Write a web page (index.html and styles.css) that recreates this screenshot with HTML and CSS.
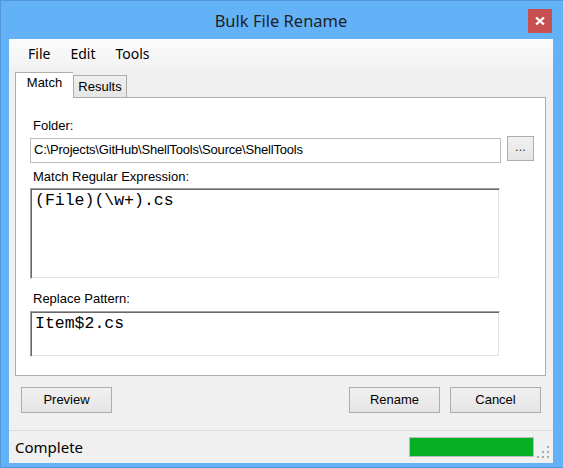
FILE: index.html
```html
<!DOCTYPE html>
<html>
<head>
<meta charset="utf-8">
<title>Bulk File Rename</title>
<link rel="stylesheet" href="styles.css">
</head>
<body>
<div class="window">
  <div class="titlebar">
    <div class="title">Bulk File Rename</div>
    <div class="close">
      <svg width="10" height="8" viewBox="0 0 10 8"><path d="M1 0.5 L9 7.5 M9 0.5 L1 7.5" stroke="#fff" stroke-width="2.2" fill="none"/></svg>
    </div>
  </div>
  <div class="client">
    <div class="menubar">
      <span class="menu-item">File</span>
      <span class="menu-item">Edit</span>
      <span class="menu-item">Tools</span>
    </div>
    <div class="tabs">
      <div class="tabstrip">
        <div class="tab tab-active">Match</div>
        <div class="tab">Results</div>
      </div>
      <div class="tabpage">
        <div class="label">Folder:</div>
        <div class="folder-row">
          <div class="textbox">C:\Projects\GitHub\ShellTools\Source\ShellTools</div>
          <div class="browse">...</div>
        </div>
        <div class="label label-regex">Match Regular Expression:</div>
        <div class="memo memo-tall">(File)(\w+).cs</div>
        <div class="label label-replace">Replace Pattern:</div>
        <div class="memo memo-short">Item$2.cs</div>
      </div>
    </div>
    <div class="buttons">
      <div class="btn">Preview</div>
      <div class="spacer"></div>
      <div class="btn">Rename</div>
      <div class="btn">Cancel</div>
    </div>
    <div class="statusbar">
      <div class="status-text">Complete</div>
      <div class="progress"><div class="progress-fill"></div></div>
      <svg class="grip" width="12" height="13" viewBox="0 0 12 13">
        <rect x="10" y="1" width="2" height="2" fill="#a9a9a9"/>
        <rect x="5" y="6" width="2" height="2" fill="#a9a9a9"/>
        <rect x="10" y="6" width="2" height="2" fill="#a9a9a9"/>
        <rect x="0" y="11" width="2" height="2" fill="#a9a9a9"/>
        <rect x="5" y="11" width="2" height="2" fill="#a9a9a9"/>
        <rect x="10" y="11" width="2" height="2" fill="#a9a9a9"/>
      </svg>
    </div>
  </div>
</div>
</body>
</html>
```
FILE: styles.css
```css
* { box-sizing: border-box; }
html, body { margin: 0; padding: 0; }
body {
  width: 563px;
  height: 468px;
  overflow: hidden;
  background: #63b2f8;
}
.window {
  width: 563px;
  height: 468px;
  background: #63b2f8;
  border-left: 1px solid #5296d6;
  border-top: 1px solid #5296d6;
  border-bottom: 1px solid #5296d6;
  padding: 0 10px 4px 8px;
  display: flex;
  flex-direction: column;
}
.titlebar {
  height: 38px;
  display: flex;
  align-items: flex-start;
}
.title {
  flex: 1;
  text-align: center;
  padding-left: 25px;
  font-family: "Noto Sans", sans-serif;
  font-size: 16.5px;
  line-height: 39px;
  color: #1f1f1f;
}
.close {
  width: 24px;
  height: 24px;
  margin-top: 8px;
  margin-right: 1px;
  background: #c75050;
  display: flex;
  align-items: center;
  justify-content: center;
}
.close svg { display: block; }
.client {
  flex: 1;
  background: #f0f0f0;
  display: flex;
  flex-direction: column;
}
.menubar {
  height: 29px;
  background: linear-gradient(#fbfbfb, #f3f3f3);
  display: flex;
  padding-left: 9px;
  font-family: "Noto Sans", sans-serif;
  font-size: 14px;
  line-height: 29px;
  color: #000;
}
.menu-item { padding: 0 10px; }
.tabs {
  margin-top: 4px;
  padding-left: 6px;
  padding-right: 7px;
}
.tabstrip {
  height: 25px;
  display: flex;
  align-items: flex-end;
  font-family: "Liberation Sans", Arial, sans-serif;
  font-size: 13px;
  color: #000;
}
.tab {
  height: 22px;
  width: 54px;
  border: 1px solid #acacac;
  border-bottom: none;
  background: linear-gradient(#f0f0f0, #e5e5e5);
  text-align: center;
  line-height: 20px;
  padding-top: 1px;
}
.tab-active {
  position: relative;
  z-index: 1;
  height: 26px;
  width: 58px;
  margin-bottom: -1px;
  background: #fff;
  border-right: none;
  line-height: 20px;
  padding-top: 0;
  padding-left: 0;
}
.tabpage {
  height: 279px;
  background: #fff;
  border: 1px solid #acacac;
  padding: 20px 0 0 14px;
  font-family: "Liberation Sans", Arial, sans-serif;
  font-size: 13px;
  color: #000;
}
.label {
  line-height: 15px;
  padding-left: 3px;
}
.label-regex { margin-top: 6px; }
.label-replace { margin-top: 12px; }
.folder-row {
  display: flex;
  align-items: flex-start;
  margin-top: 3px;
}
.textbox {
  width: 471px;
  height: 25px;
  margin-top: 2px;
  border: 1px solid #bdbdbd;
  padding-left: 3px;
  line-height: 22px;
  letter-spacing: -0.2px;
  white-space: nowrap;
  overflow: hidden;
}
.browse {
  width: 27px;
  height: 25px;
  margin-left: 6px;
  border: 1px solid #adadad;
  background: linear-gradient(#f0f0f0, #e5e5e5);
  text-align: center;
  line-height: 20px;
  font-size: 13px;
  color: #333;
}
.memo {
  width: 470px;
  margin-top: 4px;
  border: 1px solid;
  border-color: #a0a0a0 #ffffff #ffffff #a0a0a0;
  box-shadow: inset 1px 1px 0 #696969, inset -1px -1px 0 #e3e3e3;
  padding: 2px 4px 0 4px;
  font-family: "Liberation Mono", "Courier New", monospace;
  font-size: 16.5px;
  line-height: 19px;
  color: #000;
}
.memo-tall { height: 91px; }
.memo-short { height: 46px; margin-top: 5px; }
.buttons {
  display: flex;
  padding: 0 12px;
  margin-top: 11px;
  gap: 10px;
}
.spacer { flex: 1; }
.btn {
  width: 91px;
  height: 26px;
  border: 1px solid #acacac;
  background: linear-gradient(#f0f0f0, #e5e5e5);
  font-family: "Liberation Sans", Arial, sans-serif;
  font-size: 13px;
  line-height: 24px;
  text-align: center;
  color: #000;
}
.statusbar {
  margin-top: 17px;
  flex: 1;
  border-top: 1px solid #dadada;
  display: flex;
  align-items: center;
  padding-left: 6px;
  padding-right: 4px;
}
.status-text {
  font-family: "Noto Sans", sans-serif;
  font-size: 15px;
  color: #000;
}
.progress {
  margin-left: auto;
  width: 125px;
  height: 20px;
  border: 1px solid #bcbcbc;
  background: #e6e6e6;
}
.progress-fill {
  width: 100%;
  height: 100%;
  background: #06b025;
}
.grip {
  margin-left: 3px;
  margin-top: 8px;
  display: block;
}
```
